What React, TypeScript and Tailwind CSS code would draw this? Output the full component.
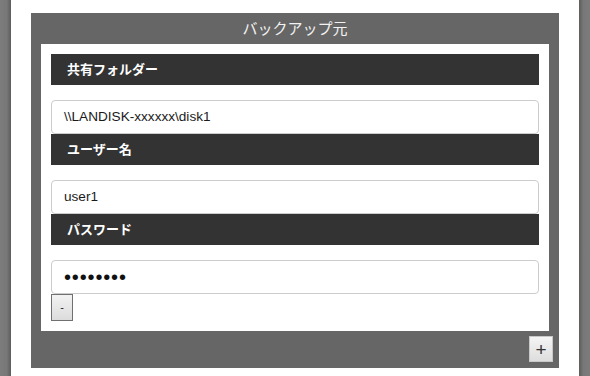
import React from "react";

const jp = '"Liberation Sans", "Noto Sans CJK JP", sans-serif';

function Field({ label, value, password }: { label: string; value: string; password?: boolean }) {
  return (
    <div className="flex flex-col">
      <div
        className="h-[31px] bg-[#333333] text-white font-bold text-[13px] flex items-center pl-[16px]"
        style={{ fontFamily: jp }}
      >
        {label}
      </div>
      <div className="mt-[15px] h-[34px] border border-[#cccccc] rounded-[4px] bg-white flex items-center pl-[12px]">
        {password ? (
          <span
            className="text-[20px] text-[#111] tracking-[0.85px] leading-none"
            style={{ fontFamily: '"Liberation Sans", sans-serif' }}
          >
            ••••••••
          </span>
        ) : (
          <span
            className="text-[13.6px] text-[#1a1a1a]"
            style={{ fontFamily: '"Liberation Sans", sans-serif' }}
          >
            {value}
          </span>
        )}
      </div>
    </div>
  );
}

export default function App() {
  return (
    <div className="w-[590px] h-[376px] flex bg-white overflow-hidden">
      <div className="w-[11px] h-full bg-[linear-gradient(to_right,#7c7c7c,#787878_60%,#5c5c5c)]" />
      <div className="flex-1 px-[20px] pt-[13px]">
        <div className="bg-[#666666] h-[355px] flex flex-col">
          <div
            className="h-[31px] flex items-center justify-center text-[#f2f2f2] text-[15px]"
            style={{ fontFamily: '"Noto Sans CJK JP", sans-serif' }}
          >
            バックアップ元
          </div>
          <div className="mx-[10px] bg-white p-[10px] flex flex-col">
            <Field label="共有フォルダー" value="\\LANDISK-xxxxxx\disk1" />
            <Field label="ユーザー名" value="user1" />
            <Field label="パスワード" value="" password />
            <div className="flex">
              <button
                className="w-[22px] h-[27px] border border-[#707070] bg-[linear-gradient(#f2f2f2,#dcdcdc)] text-[#222] text-[11px] flex items-center justify-center leading-none"
                style={{ fontFamily: '"Liberation Sans", sans-serif' }}
              >
                -
              </button>
            </div>
          </div>
          <div className="flex justify-end pr-[6px] pt-[5px]">
            <button
              className="w-[24px] h-[26px] border border-[#c8c8c8] bg-[linear-gradient(#f5f5f5,#dddddd)] text-[#333] text-[19px] flex items-center justify-center leading-none"
              style={{ fontFamily: '"Liberation Sans", sans-serif' }}
            >
              +
            </button>
          </div>
        </div>
      </div>
      <div className="w-[11px] h-full bg-[linear-gradient(to_right,#5c5c5c,#787878_40%,#7c7c7c)]" />
    </div>
  );
}
